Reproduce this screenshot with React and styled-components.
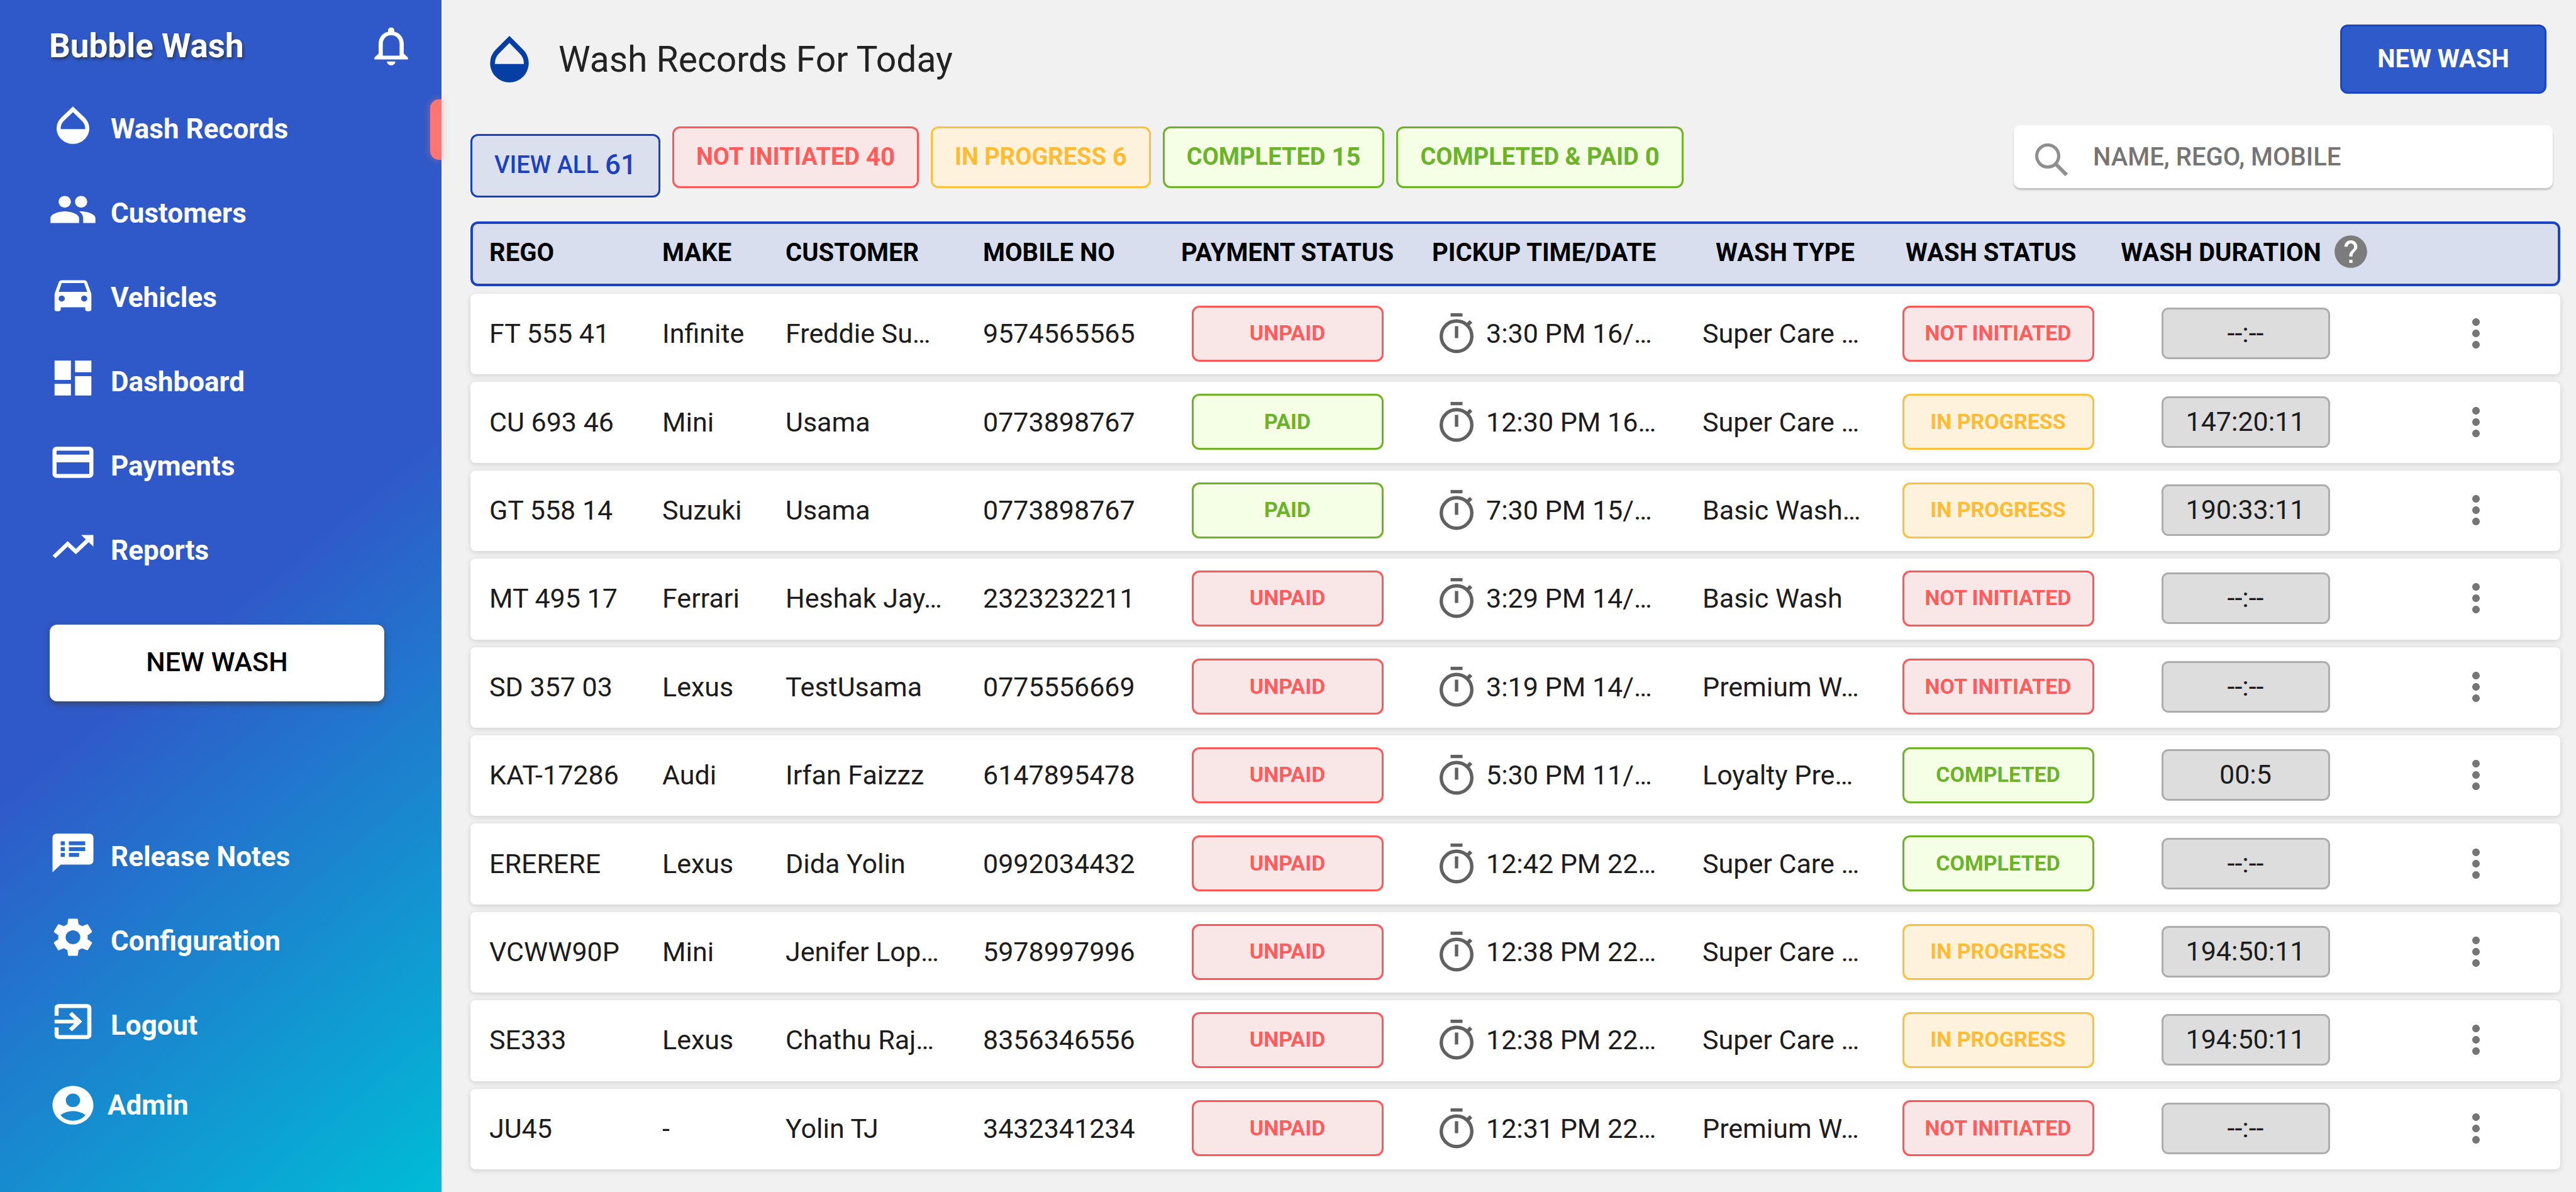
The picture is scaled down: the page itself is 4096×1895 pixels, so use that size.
import React from 'react';
import styled, { createGlobalStyle, css } from 'styled-components';
import {
  MdOpacity,
  MdPeople,
  MdDirectionsCar,
  MdDashboard,
  MdPayment,
  MdTrendingUp,
  MdSpeakerNotes,
  MdSettings,
  MdExitToApp,
  MdAccountCircle,
  MdNotificationsNone,
  MdHelp,
  MdMoreVert,
} from 'react-icons/md';

const GlobalStyle = createGlobalStyle`
  *, *::before, *::after { box-sizing: border-box; }
  body { margin: 0; background: #f1f1f1; }
  body, button, input { font-family: Roboto, "Liberation Sans", sans-serif; }
  button { cursor: pointer; }
`;

const tones = {
  blue: { line: '#1a40c2', text: '#1c41c0', fill: '#dae0ee' },
  red: { line: '#ff5757', text: '#ff5c5c', fill: '#f9e7e8' },
  amber: { line: '#fdc03a', text: '#fdbc33', fill: '#fff2dc' },
  green: { line: '#6cb424', text: '#6cb32a', fill: '#f4ffe6' },
};

const Page = styled.div`
  display: flex;
  min-height: 100vh;
`;

/* Sidebar */

const Sidebar = styled.aside`
  flex: 0 0 702px;
  display: flex;
  flex-direction: column;
  color: #fff;
  background: linear-gradient(140deg, #2f59c9 51%, #00bcd6 100%);
`;

const Brand = styled.div`
  display: flex;
  align-items: center;
  justify-content: space-between;
  height: 138px;
  padding: 8px 40px 0 78px;
`;

const BrandName = styled.span`
  font-size: 53px;
  font-weight: 700;
  text-shadow: 2px 3px 4px rgba(40, 40, 40, 0.7);
`;

const BellButton = styled.button`
  display: flex;
  padding: 0;
  border: 0;
  background: none;
  color: #fff;

  svg {
    width: 80px;
    height: 74px;
  }
`;

const NavList = styled.ul`
  margin: 0;
  padding: 0;
  list-style: none;
`;

const NavItem = styled.li`
  position: relative;
  height: ${(p) => (p.$compact ? 120 : 134)}px;
`;

const NavLink = styled.a`
  display: flex;
  align-items: center;
  gap: ${(p) => (p.$compact ? 16 : 21)}px;
  height: 100%;
  padding-left: 77px;
  color: #fff;
  font-size: 44px;
  font-weight: 700;
  text-decoration: none;

  svg {
    flex: none;
    width: 78px;
    height: 74px;
    margin-bottom: ${(p) => (p.$compact ? 0 : 12)}px;
  }
`;

const ActiveTab = styled.span`
  position: absolute;
  top: 20px;
  right: 0;
  width: 18px;
  height: 96px;
  border-radius: 14px 0 0 14px;
  background: #ff7573;
  box-shadow: 0 0 12px rgba(255, 117, 115, 0.5);
`;

const SideAction = styled.button`
  height: 122px;
  margin: 51px 91px 180px 79px;
  padding: 0 0 4px;
  border: 0;
  border-radius: 12px;
  background: #fff;
  color: #000;
  font-size: 43px;
  font-weight: 500;
  box-shadow: 0 4px 10px rgba(60, 60, 60, 0.7);
`;

/* Main area */

const Main = styled.main`
  flex: 1;
  min-width: 0;
  display: flex;
  flex-direction: column;
  padding: 39px 25px 36px 46px;
`;

const Header = styled.header`
  display: flex;
  align-items: center;
  gap: 32px;
  height: 110px;
  padding: 0 22px 0 16px;

  > svg {
    width: 92px;
    height: 92px;
    color: #053fa4;
  }
`;

const Title = styled.h1`
  flex: 1;
  margin: 0;
  color: #222;
  font-size: 57px;
  font-weight: 400;
`;

const PrimaryButton = styled.button`
  width: 328px;
  height: 110px;
  padding: 0 0 2px;
  border: 3px solid #1a45c8;
  border-radius: 12px;
  background: #2f5aca;
  color: #fff;
  font-size: 40px;
  font-weight: 700;
`;

const Toolbar = styled.div`
  display: flex;
  justify-content: space-between;
  align-items: flex-start;
  margin: 50px 0 38px;
  padding-right: 12px;
`;

const Filters = styled.div`
  display: flex;
  align-items: flex-start;
  gap: 19px;
  padding-top: 2px;
`;

const Chip = styled.button`
  display: flex;
  align-items: center;
  gap: 10px;
  height: 98px;
  padding: 0 35px 2px;
  border: 3px solid ${(p) => tones[p.$tone].line};
  border-radius: 12px;
  background: ${(p) => tones[p.$tone].fill};
  color: ${(p) => tones[p.$tone].text};
  font-size: 38px;
  font-weight: 700;
  white-space: nowrap;

  ${(p) =>
    p.$selected &&
    css`
      height: 101px;
      margin-top: 12px;
      padding-bottom: 4px;
      font-weight: 500;
    `}
`;

const ChipCount = styled.span`
  font-size: ${(p) => (p.$selected ? 44 : 40)}px;
`;

const SearchBox = styled.label`
  display: flex;
  align-items: center;
  gap: 40px;
  flex: 0 1 857px;
  height: 100px;
  padding: 0 34px;
  border-radius: 10px;
  background: #fff;
  box-shadow: 0 3px 3px rgba(0, 0, 0, 0.2);

  svg {
    flex: none;
    width: 52px;
    height: 52px;
    margin-top: 10px;
  }
`;

const SearchInput = styled.input`
  flex: 1;
  min-width: 0;
  padding: 0;
  border: 0;
  outline: 0;
  background: none;
  color: #333;
  font-size: 40px;
  font-weight: 500;

  &::placeholder {
    color: #757575;
    opacity: 1;
  }
`;

/* Table */

const Table = styled.table`
  flex: 1;
  display: flex;
  flex-direction: column;
  gap: 12px;
`;

const TableHead = styled.thead`
  display: block;
`;

const TableBody = styled.tbody`
  flex: 1;
  display: flex;
  flex-direction: column;
  gap: 12px;
`;

const columns = css`
  display: grid;
  grid-template-columns:
    minmax(0, 275fr) minmax(0, 196fr) minmax(0, 314fr) minmax(0, 254fr)
    minmax(0, 460fr) minmax(0, 430fr) minmax(0, 263fr) minmax(0, 414fr)
    minmax(0, 373fr) minmax(0, 314fr);
  align-items: center;
  padding: 0 0 4px 30px;
`;

const HeadRow = styled.tr`
  ${columns}
  height: 103px;
  border-radius: 12px;
  outline: 4px solid #1a42c4;
  outline-offset: -4px;
  background: #d9deee;
`;

const Row = styled.tr`
  ${columns}
  flex: 1;
  min-height: 100px;
  padding-bottom: 2px;
  border-radius: 8px;
  background: #fff;
  box-shadow: 0 2px 8px rgba(0, 0, 0, 0.14);
`;

const align = css`
  display: flex;
  align-items: center;
  justify-content: ${(p) => (p.$center ? 'center' : 'flex-start')};
  padding: 0;
  white-space: nowrap;
`;

const HeadCell = styled.th`
  ${align}
  gap: 16px;
  padding-left: ${(p) => p.$indent || 0}px;
  color: #000;
  font-size: 40px;
  font-weight: 700;
`;

const HelpButton = styled.button`
  display: flex;
  flex: none;
  margin-bottom: 4px;
  padding: 0;
  border: 0;
  color: #7c7c7c;
  background: radial-gradient(circle, #fff 50%, transparent 52%);

  svg {
    width: 62px;
    height: 62px;
  }
`;

const Cell = styled.td`
  ${align}
  gap: 20px;
  color: #1c1c1c;
  font-size: 43px;
`;

const PickupCell = styled(Cell)`
  padding-left: 12px;

  svg {
    flex: none;
    width: 54px;
    height: 64px;
  }
`;

const MenuCell = styled(Cell)`
  justify-content: flex-end;
  padding-right: 98px;
`;

const Badge = styled.span`
  display: flex;
  align-items: center;
  justify-content: center;
  width: 305px;
  height: 89px;
  padding-bottom: 2px;
  border: 3px solid ${(p) => tones[p.$tone].line};
  border-radius: 12px;
  background: ${(p) => tones[p.$tone].fill};
  color: ${(p) => tones[p.$tone].text};
  font-size: 34px;
  font-weight: 700;
`;

const Duration = styled.span`
  display: flex;
  align-items: center;
  justify-content: center;
  width: 268px;
  height: 82px;
  padding-bottom: 2px;
  border: 3px solid #adadad;
  border-radius: 11px;
  background: #dddddd;
`;

const MenuButton = styled.button`
  display: flex;
  padding: 0;
  border: 0;
  background: none;
  color: #757575;

  svg {
    width: 72px;
    height: 72px;
  }
`;

const SearchIcon = () => (
  <svg viewBox="0 0 52 52" fill="none" stroke="#8f8f8f" aria-hidden="true">
    <circle cx="20" cy="20" r="17.5" strokeWidth="5" />
    <path d="M33 33L50 50" strokeWidth="6" />
  </svg>
);

const StopwatchIcon = () => (
  <svg viewBox="0 0 54 64" fill="none" stroke="#616161" aria-hidden="true">
    <circle cx="27" cy="36.5" r="24.3" strokeWidth="5.4" />
    <path d="M17.5 2.5H36.5M27 20.5V39.5" strokeWidth="5.4" />
    <path d="M44 19L50 13" strokeWidth="6" />
  </svg>
);

const mainNav = [
  ['Wash Records', MdOpacity],
  ['Customers', MdPeople],
  ['Vehicles', MdDirectionsCar],
  ['Dashboard', MdDashboard],
  ['Payments', MdPayment],
  ['Reports', MdTrendingUp],
];

const footNav = [
  ['Release Notes', MdSpeakerNotes],
  ['Configuration', MdSettings],
  ['Logout', MdExitToApp],
  ['Admin', MdAccountCircle],
];

const filters = [
  ['VIEW ALL', 61, 'blue'],
  ['NOT INITIATED', 40, 'red'],
  ['IN PROGRESS', 6, 'amber'],
  ['COMPLETED', 15, 'green'],
  ['COMPLETED & PAID', 0, 'green'],
];

const statusTone = {
  UNPAID: 'red',
  PAID: 'green',
  'NOT INITIATED': 'red',
  'IN PROGRESS': 'amber',
  COMPLETED: 'green',
};

const records = [
  ['FT 555 41', 'Infinite', 'Freddie Su…', '9574565565', 'UNPAID', '3:30 PM 16/…', 'Super Care …', 'NOT INITIATED', '--:--'],
  ['CU 693 46', 'Mini', 'Usama', '0773898767', 'PAID', '12:30 PM 16…', 'Super Care …', 'IN PROGRESS', '147:20:11'],
  ['GT 558 14', 'Suzuki', 'Usama', '0773898767', 'PAID', '7:30 PM 15/…', 'Basic Wash…', 'IN PROGRESS', '190:33:11'],
  ['MT 495 17', 'Ferrari', 'Heshak Jay…', '2323232211', 'UNPAID', '3:29 PM 14/…', 'Basic Wash', 'NOT INITIATED', '--:--'],
  ['SD 357 03', 'Lexus', 'TestUsama', '0775556669', 'UNPAID', '3:19 PM 14/…', 'Premium W…', 'NOT INITIATED', '--:--'],
  ['KAT-17286', 'Audi', 'Irfan Faizzz', '6147895478', 'UNPAID', '5:30 PM 11/…', 'Loyalty Pre…', 'COMPLETED', '00:5'],
  ['ERERERE', 'Lexus', 'Dida Yolin', '0992034432', 'UNPAID', '12:42 PM 22…', 'Super Care …', 'COMPLETED', '--:--'],
  ['VCWW90P', 'Mini', 'Jenifer Lop…', '5978997996', 'UNPAID', '12:38 PM 22…', 'Super Care …', 'IN PROGRESS', '194:50:11'],
  ['SE333', 'Lexus', 'Chathu Raj…', '8356346556', 'UNPAID', '12:38 PM 22…', 'Super Care …', 'IN PROGRESS', '194:50:11'],
  ['JU45', '-', 'Yolin TJ', '3432341234', 'UNPAID', '12:31 PM 22…', 'Premium W…', 'NOT INITIATED', '--:--'],
];

function NavGroup({ items, active }) {
  return (
    <NavList>
      {items.map(([label, Icon]) => {
        const compact = label === 'Admin';
        return (
          <NavItem key={label} $compact={compact}>
            <NavLink href="#" $compact={compact} aria-current={label === active ? 'page' : undefined}>
              <Icon preserveAspectRatio="none" aria-hidden="true" />
              {label}
            </NavLink>
            {label === active && <ActiveTab />}
          </NavItem>
        );
      })}
    </NavList>
  );
}

function RecordRow({ record }) {
  const [rego, make, customer, mobile, payment, pickup, type, status, duration] = record;
  return (
    <Row>
      <Cell>{rego}</Cell>
      <Cell>{make}</Cell>
      <Cell>{customer}</Cell>
      <Cell>{mobile}</Cell>
      <Cell $center>
        <Badge $tone={statusTone[payment]}>{payment}</Badge>
      </Cell>
      <PickupCell>
        <StopwatchIcon />
        {pickup}
      </PickupCell>
      <Cell>{type}</Cell>
      <Cell $center>
        <Badge $tone={statusTone[status]}>{status}</Badge>
      </Cell>
      <Cell $center>
        <Duration>{duration}</Duration>
      </Cell>
      <MenuCell>
        <MenuButton type="button" aria-label={`Actions for ${rego}`}>
          <MdMoreVert />
        </MenuButton>
      </MenuCell>
    </Row>
  );
}

export default function App() {
  return (
    <Page>
      <GlobalStyle />
      <Sidebar>
        <Brand>
          <BrandName>Bubble Wash</BrandName>
          <BellButton type="button" aria-label="Notifications">
            <MdNotificationsNone preserveAspectRatio="none" />
          </BellButton>
        </Brand>
        <nav>
          <NavGroup items={mainNav} active="Wash Records" />
        </nav>
        <SideAction type="button">NEW WASH</SideAction>
        <NavGroup items={footNav} />
      </Sidebar>
      <Main>
        <Header>
          <MdOpacity aria-hidden="true" />
          <Title>Wash Records For Today</Title>
          <PrimaryButton type="button">NEW WASH</PrimaryButton>
        </Header>
        <Toolbar>
          <Filters>
            {filters.map(([label, count, tone]) => {
              const selected = label === 'VIEW ALL';
              return (
                <Chip key={label} type="button" $tone={tone} $selected={selected} aria-pressed={selected}>
                  {label} <ChipCount $selected={selected}>{count}</ChipCount>
                </Chip>
              );
            })}
          </Filters>
          <SearchBox>
            <SearchIcon />
            <SearchInput type="search" placeholder="NAME, REGO, MOBILE" aria-label="Name, rego or mobile" />
          </SearchBox>
        </Toolbar>
        <Table>
          <TableHead>
            <HeadRow>
              <HeadCell scope="col">REGO</HeadCell>
              <HeadCell scope="col">MAKE</HeadCell>
              <HeadCell scope="col">CUSTOMER</HeadCell>
              <HeadCell scope="col">MOBILE NO</HeadCell>
              <HeadCell scope="col" $center>PAYMENT STATUS</HeadCell>
              <HeadCell scope="col">PICKUP TIME/DATE</HeadCell>
              <HeadCell scope="col" $center>WASH TYPE</HeadCell>
              <HeadCell scope="col" $indent={60}>WASH STATUS</HeadCell>
              <HeadCell scope="col" $center>
                WASH DURATION
                <HelpButton type="button" aria-label="About wash duration">
                  <MdHelp />
                </HelpButton>
              </HeadCell>
              <HeadCell as="td" />
            </HeadRow>
          </TableHead>
          <TableBody>
            {records.map((record) => (
              <RecordRow key={record[0]} record={record} />
            ))}
          </TableBody>
        </Table>
      </Main>
    </Page>
  );
}
